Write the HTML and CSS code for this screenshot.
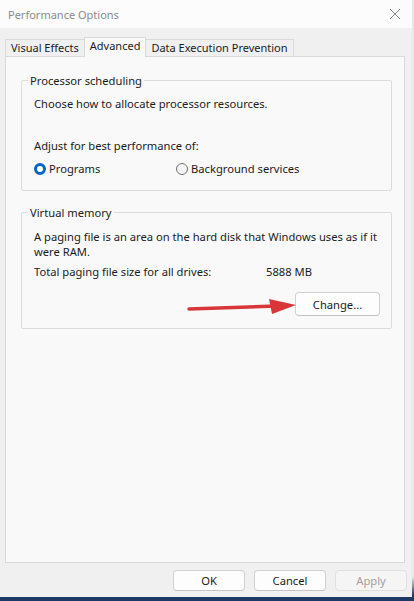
FILE: index.html
```html
<!DOCTYPE html>
<html lang="en">
<head>
    <meta charset="UTF-8">
    <meta name="viewport" content="width=device-width, initial-scale=1.0">
    <title>Performance Options</title>
    <link rel="stylesheet" href="styles.css">
</head>
<body>
    <div class="window">
        <!-- Title bar -->
        <div class="title-bar">
            <span class="title">Performance Options</span>
            <svg class="close" width="12" height="12" viewBox="0 0 12 12">
                <path d="M1 1 L11 11 M11 1 L1 11" stroke="#8a8a8a" stroke-width="1" fill="none"/>
            </svg>
        </div>

        <div class="dialog">
            <!-- Tabs -->
            <div class="tabs">
                <div class="tab">Visual Effects</div>
                <div class="tab active">Advanced</div>
                <div class="tab">Data Execution Prevention</div>
            </div>

            <div class="panel">
                <fieldset class="group group-cpu">
                    <legend>Processor scheduling</legend>
                    <p>Choose how to allocate processor resources.</p>
                    <p class="adjust">Adjust for best performance of:</p>
                    <div class="radios">
                        <label class="radio checked"><span class="dot"></span>Programs</label>
                        <label class="radio"><span class="dot"></span>Background services</label>
                    </div>
                </fieldset>

                <fieldset class="group group-vm">
                    <legend>Virtual memory</legend>
                    <p>A paging file is an area on the hard disk that Windows uses as if it were RAM.</p>
                    <div class="total">
                        <span class="total-label">Total paging file size for all drives:</span>
                        <span>5888 MB</span>
                    </div>
                    <div class="change-row">
                        <svg class="arrow" width="110" height="18" viewBox="0 0 110 18">
                            <path d="M2 11 L90 8" stroke="#d9363a" stroke-width="3.5" stroke-linecap="round" fill="none"/>
                            <path d="M82 1 L109 7 L85 16 Z" fill="#d9363a"/>
                        </svg>
                        <button class="btn">Change...</button>
                    </div>
                </fieldset>
            </div>

            <!-- Dialog buttons -->
            <div class="footer">
                <button class="btn">OK</button>
                <button class="btn">Cancel</button>
                <button class="btn" disabled>Apply</button>
            </div>
        </div>
    </div>
</body>
</html>
```

FILE: styles.css
```css
* {
    margin: 0;
    padding: 0;
    box-sizing: border-box;
}

body {
    width: 414px;
    height: 601px;
    overflow: hidden;
    font-family: "Noto Sans", "Open Sans", sans-serif;
    font-size: 11.2px;
    color: #1b1b1b;
    background: linear-gradient(to bottom, #dfeaf6 0%, #dfeaf6 96%, #1d3a66 99%);
}

.window {
    width: 412px;
    height: 597px;
    background-color: #f0f0f0;
    display: flex;
    flex-direction: column;
}

.title-bar {
    height: 28px;
    background-color: #fcfcfc;
    display: flex;
    align-items: center;
    justify-content: space-between;
    padding: 0 11px 0 8px;
}

.title {
    color: #8a8a8a;
    font-size: 11px;
}

.dialog {
    flex: 1;
    display: flex;
    flex-direction: column;
    padding: 9px 7px 0 5px;
}

.tabs {
    display: flex;
    align-items: flex-end;
    height: 19px;
}

.tab {
    height: 17px;
    padding: 0 5px;
    line-height: 16px;
    background-color: #f0f0f0;
    border: 1px solid #d9d9d9;
    border-bottom: none;
    margin-right: -1px;
    font-size: 11px;
}

.tab.active {
    height: 20px;
    margin-top: -3px;
    background-color: #f9f9f9;
    position: relative;
    z-index: 1;
    margin-bottom: -1px;
}

.panel {
    height: 507px;
    background-color: #f9f9f9;
    border: 1px solid #d9d9d9;
    padding: 16px 12px 0 15px;
    display: flex;
    flex-direction: column;
    gap: 14px;
}

.group {
    border: 1px solid #dcdcdc;
    border-radius: 2px;
    padding: 0 11px 0 12px;
}

.group legend {
    padding: 0 2px;
    margin-left: -6px;
}

.group p {
    line-height: 15px;
}

.group-cpu {
    height: 118px;
    padding-top: 8px;
}

.adjust {
    margin-top: 27px;
}

.radios {
    display: flex;
    margin-top: 8px;
}

.radio {
    display: flex;
    align-items: center;
    gap: 3px;
    width: 142px;
}

.dot {
    width: 12px;
    height: 12px;
    border-radius: 50%;
    border: 1px solid #707070;
    background-color: #f6f6f6;
}

.radio.checked .dot {
    border: 3.5px solid #0067c0;
    background-color: #ffffff;
}

.group-vm {
    height: 124px;
    padding-top: 9px;
}

.total {
    display: flex;
    margin-top: 5px;
    line-height: 15px;
}

.total-label {
    width: 232px;
}

.change-row {
    display: flex;
    align-items: center;
    justify-content: flex-end;
    margin-top: 13px;
    position: relative;
}

.arrow {
    position: absolute;
    right: 83px;
    top: 6px;
}

.btn {
    font-family: inherit;
    font-size: 11.2px;
    color: #1b1b1b;
    background-color: #fdfdfd;
    border: 1px solid #d0d0d0;
    border-bottom-color: #c4c4c4;
    border-radius: 4px;
    height: 24px;
    width: 85px;
}

.footer {
    display: flex;
    justify-content: flex-end;
    gap: 9px;
    padding-top: 7px;
    margin-right: -2px;
}

.footer .btn {
    width: 72px;
    height: 21px;
}

.btn:disabled {
    color: #a0a0a0;
    background-color: #f5f5f5;
    border-color: #e0e0e0;
}
```
